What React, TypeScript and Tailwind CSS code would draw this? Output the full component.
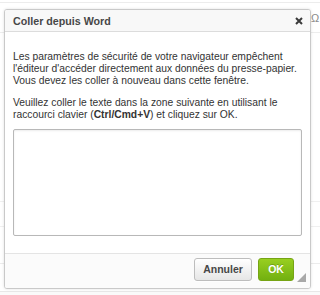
import React from "react";

export default function App() {
  return (
    <div
      className="relative w-[320px] h-[295px] bg-white overflow-hidden"
      style={{ fontFamily: '"Liberation Sans", Arial, Helvetica, sans-serif' }}
    >
      {/* page behind the dialog */}
      <div className="flex flex-col">
        <div className="h-[2px]" />
        <div className="h-[30px] border-t border-[#ececec] flex justify-end items-start pt-[9px]">
          <span className="text-[11px] leading-[12px] text-[#8a8a8a] w-[9px] overflow-hidden">Ω</span>
        </div>
        <div className="h-[169px] border-t border-[#ededed]" />
        <div className="h-[25px] border-t border-[#f0f0f0]" />
        <div className="h-[37px] border-t border-[#f0f0f0]" />
        <div className="h-[28px] border-t border-[#ececec]" />
        <div className="h-[4px] border-t border-[#e8e8e8] bg-[#fafafa]" />
      </div>

      {/* dialog */}
      <div className="absolute left-[4px] top-[9px] w-[307px] h-[280px] bg-white border border-[#c9c9c9] rounded-[3px] shadow-[0_0_3px_rgba(0,0,0,0.12)] flex flex-col overflow-hidden">
        <div className="h-[22px] shrink-0 bg-[#f8f8f8] border-b border-[#dcdcdc] flex items-center justify-between pl-[8px] pr-[7px]">
          <span className="text-[10.7px] font-bold text-[#474747] leading-[21px] pt-[1px]">
            Coller depuis Word
          </span>
          <svg width="8" height="8" viewBox="0 0 8 8" className="mt-[1px]">
            <path d="M1 1 L7 7 M7 1 L1 7" stroke="#3a3a3a" strokeWidth="2" strokeLinecap="butt" />
          </svg>
        </div>

        <div className="flex-1 px-[8px] pt-[19px] text-[10.3px] leading-[12px] text-[#333]">
          <p>
            Les paramètres de sécurité de votre navigateur empêchent l'éditeur d'accéder
            directement aux données du presse-papier. Vous devez les coller à nouveau dans
            cette fenêtre.
          </p>
          <p className="mt-[10px]">
            {"Veuillez coller le texte dans la zone suivante en utilisant le raccourci clavier ("}
            <b>Ctrl/Cmd+V</b>
            {") et cliquez sur OK."}
          </p>
          <div className="mt-[8px] h-[107px] w-[289px] border border-[#b8b8b8] rounded-[2px] bg-white shadow-[inset_0_1px_2px_rgba(0,0,0,0.08)]" />
        </div>

        <div className="relative h-[35px] shrink-0 border-t border-[#e4e4e4] bg-[#fbfbfb] flex justify-end items-start gap-[6px] pt-[4px] pr-[16px]">
          <button className="w-[58px] h-[23px] rounded-[3px] border border-[#bdbdbd] bg-gradient-to-b from-white to-[#e6e6e6] text-[10.5px] font-bold text-[#474747] shadow-[0_1px_0_rgba(255,255,255,0.8)]">
            Annuler
          </button>
          <button className="w-[36px] h-[23px] rounded-[3px] border border-[#76a414] bg-gradient-to-b from-[#98cf20] to-[#72b010] text-[10.5px] font-bold text-white [text-shadow:0_-1px_0_rgba(0,0,0,0.2)]">
            OK
          </button>
          <svg width="9" height="9" viewBox="0 0 9 9" className="absolute right-[4px] bottom-[6px]">
            <path d="M9 0 L9 9 L0 9 Z" fill="#a8a8a8" />
          </svg>
        </div>
      </div>
    </div>
  );
}
